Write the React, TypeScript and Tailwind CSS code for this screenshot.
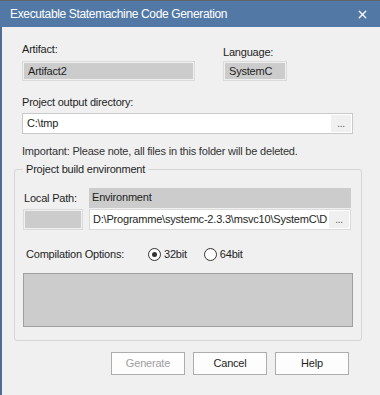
import { X } from "lucide-react";

const font = { fontFamily: '"Liberation Sans", Arial, sans-serif' };

function Radio({ checked, label }: { checked?: boolean; label: string }) {
  return (
    <label className="flex items-center gap-[3px]">
      <span className="w-[13px] h-[13px] rounded-full border border-[#333333] bg-white flex items-center justify-center">
        {checked && <span className="w-[5px] h-[5px] rounded-full bg-[#333333]" />}
      </span>
      <span>{label}</span>
    </label>
  );
}

function Button({ label, disabled }: { label: string; disabled?: boolean }) {
  return (
    <button
      className={`w-[74px] h-[23px] bg-[#fdfdfd] border border-[#adadad] text-[11px] tracking-[-0.2px] ${
        disabled ? "text-[#a0a0a0]" : "text-[#1e1e1e]"
      }`}
    >
      {label}
    </button>
  );
}

export default function App() {
  return (
    <div className="w-[380px] h-[395px] flex flex-col bg-[#f0f0f0] text-[11px] tracking-[-0.2px] text-[#1e1e1e] overflow-hidden" style={font}>
      {/* Title bar */}
      <div className="h-[1px] bg-[#5f6368]" />
      <div className="h-[26px] bg-[#5279a5] flex items-center justify-between pl-[10px] pr-[11px] text-white text-[12px] tracking-[-0.35px]">
        <span>Executable Statemachine Code Generation</span>
        <X className="w-[13px] h-[13px]" strokeWidth={2.5} />
      </div>

      <div className="flex-1 border-l-2 border-[#4d6d97] pl-[20px] pr-[27px] pt-[15px]">
        {/* Artifact / Language */}
        <div className="flex gap-[28px]">
          <div className="flex flex-col w-[173px]">
            <span className="h-[15px] leading-[15px]">Artifact:</span>
            <div className="mt-[4px] h-[20px] border border-[#dadada] p-[1px]">
              <div className="h-full bg-[#cccccc] pl-[4px] leading-[16px]">Artifact2</div>
            </div>
          </div>
          <div className="flex flex-col w-[64px]">
            <span className="h-[15px] leading-[15px] mt-[3px]">Language:</span>
            <div className="mt-[1px] h-[20px] border border-[#dadada] p-[1px]">
              <div className="h-full bg-[#cccccc] pl-[4px] leading-[16px]">SystemC</div>
            </div>
          </div>
        </div>

        {/* Output directory */}
        <div className="mt-[14px] leading-[15px]">Project output directory:</div>
        <div className="mt-[3px] h-[21px] border border-[#c9c9c9] bg-white flex items-center pl-[4px] pr-[1px]">
          <span className="flex-1">C:\tmp</span>
          <span className="w-[20px] h-[17px] bg-[#f0f0f0] text-[10px] text-[#555] flex items-center justify-center">...</span>
        </div>
        <div className="mt-[10px] leading-[15px] text-[#333333]">Important: Please note, all files in this folder will be deleted.</div>

        {/* Group box */}
        <div className="relative mt-[10px] -ml-[8px] w-[348px] h-[172px] border border-[#d5d5d5] rounded-[3px] pl-[8px] pt-[18px]">
          <span className="absolute left-[8px] -top-[8px] bg-[#f0f0f0] px-[3px] leading-[15px]">Project build environment</span>
          <div className="flex gap-[6px]">
            <div className="w-[60px] h-[20px] leading-[20px] pl-[1px] whitespace-nowrap">Local Path:</div>
            <div className="w-[262px] h-[20px] bg-[#cccccc] pl-[3px] leading-[18px]">Environment</div>
          </div>
          <div className="flex gap-[6px] mt-[1px]">
            <div className="w-[60px] h-[21px] border border-[#dadada] p-[1px]">
              <div className="h-full bg-[#cccccc]" />
            </div>
            <div className="w-[262px] h-[21px] border border-[#dadada] bg-white flex items-center pl-[3px] pr-[1px] overflow-hidden">
              <span className="flex-1 whitespace-nowrap overflow-hidden">D:\Programme\systemc-2.3.3\msvc10\SystemC\D</span>
              <span className="w-[20px] h-[17px] bg-[#f0f0f0] text-[10px] text-[#555] flex items-center justify-center shrink-0">...</span>
            </div>
          </div>
          <div className="flex items-center mt-[17px] h-[15px]">
            <span className="w-[125px] pl-[3px]">Compilation Options:</span>
            <div className="flex gap-[17px]">
              <Radio checked label="32bit" />
              <Radio label="64bit" />
            </div>
          </div>
          <div className="mt-[11px] w-[330px] h-[54px] bg-[#cccccc] border border-[#a0a0a0]" />
        </div>

        {/* Buttons */}
        <div className="flex justify-end gap-[8px] mt-[11px] pr-[4px]">
          <Button label="Generate" disabled />
          <Button label="Cancel" />
          <Button label="Help" />
        </div>
      </div>
    </div>
  );
}
